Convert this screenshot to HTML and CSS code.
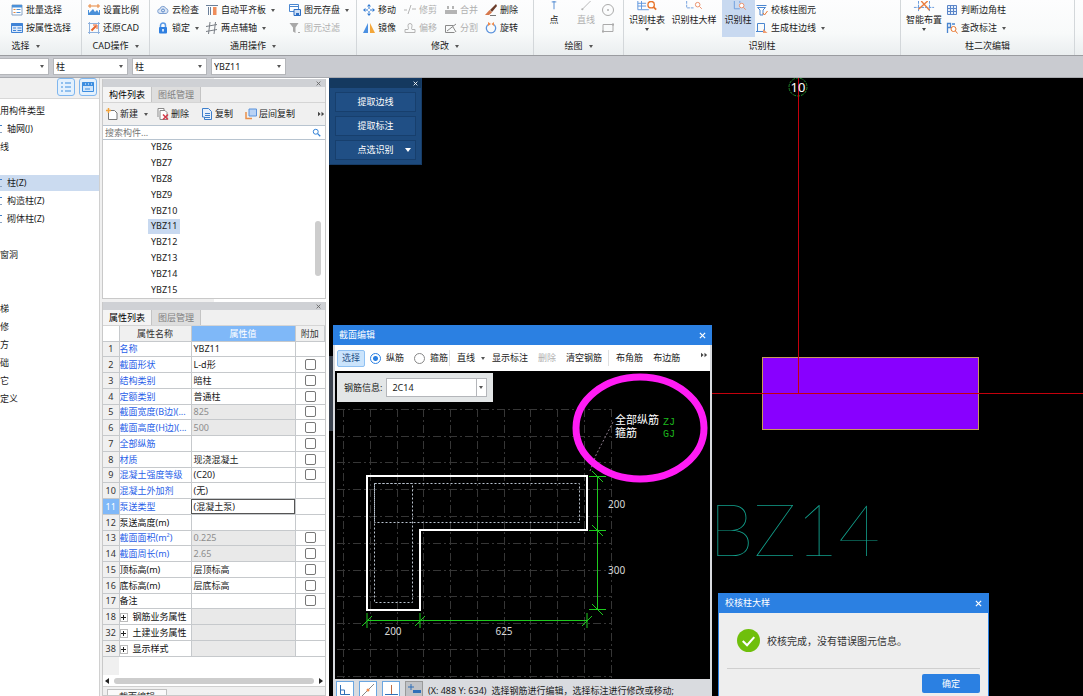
FILE: index.html
```html
<!DOCTYPE html>
<html lang="zh-CN">
  <head>
    <meta charset="UTF-8" />
    <meta name="viewport" content="width=device-width, initial-scale=1.0" />
    <title>校核柱大样</title>
    <link rel="stylesheet" href="styles.css" />
  </head>
  <body>
    <!-- Icon set -->
    <svg class="icon-defs" aria-hidden="true">
      <symbol id="i-batch" viewBox="0 0 12 12"><path d="M1 1h10v10H1z" fill="#fff" stroke="#8aa4c4"/><path d="M1 1h10v2.500H1z" fill="#4a90d9"/><path d="M2.500 5.500h2M2.500 8.500h2" stroke="#e8853a"/><path d="M5.500 5.500h4M5.500 8.500h4" stroke="#4a90d9"/></symbol>
      <symbol id="i-attr" viewBox="0 0 12 12"><path d="M.5 1.500h11v9H.5z" fill="#dbe9fa" stroke="#3f83d6"/><path d="M.5 1h11v3H.5z" fill="#3f83d6"/><path d="M2 6h3M2 8.500h3M6.500 6h4M6.500 8.500h4" stroke="#3f83d6"/></symbol>
      <symbol id="i-scale" viewBox="0 0 12 12"><path d="M0 2h12M2 0v4M10 0v4" stroke="#e8853a" fill="none"/><path d="M0 11V6h1v3l4-4 2 3 2-2 2 3V6h1v5z" fill="#4a90d9"/></symbol>
      <symbol id="i-restore" viewBox="0 0 12 12"><path d="M1.500 0v12M10.500 0v12M0 1.500h12M0 10.500h12" stroke="#8fb2de" fill="none"/><path d="M3.500 8.500L8 4" stroke="#e8632a" stroke-width="2"/><path d="M5 3h4v4" fill="none" stroke="#e8632a"/></symbol>
      <symbol id="i-cloud" viewBox="0 0 12 12"><path d="M3 9.500a2.300 2.300 0 0 1 0-4.600 3 3 0 0 1 5.800-.5A2.600 2.600 0 0 1 9 9.500z" fill="#dbe6f5" stroke="#7d9fd0"/><circle cx="6" cy="6.500" r="1.500" fill="none" stroke="#5a87c8"/></symbol>
      <symbol id="i-lock" viewBox="0 0 12 12"><path d="M3.500 6V3.500a2.500 2.500 0 0 1 5 0V6" fill="none" stroke="#5a9ae6" stroke-width="1.500"/><rect x="2" y="5" width="8" height="6.500" rx="1" fill="#2f7fe0"/><path d="M6 7v2.500" stroke="#fff" stroke-width="1.500"/></symbol>
      <symbol id="i-align" viewBox="0 0 12 12"><path d="M0 1.500h12M2.500 3v8M4.500 3v8" stroke="#6b7f99" fill="none"/><path d="M7 3h3.500v8H7z" fill="#ef8d5b"/></symbol>
      <symbol id="i-axis" viewBox="0 0 12 12"><path d="M4 0L2.500 12M9.500 0L8 12M0 4.500l11-2M0 9.500l11-2" stroke="#7a7f86" fill="none"/></symbol>
      <symbol id="i-save" viewBox="0 0 12 12"><path d="M.5.5h9v7h-9z" fill="#fff" stroke="#4a86d0"/><path d="M.5 2.500h9" stroke="#4a86d0"/><path d="M5 5.500h6.500v6H5z" fill="#cfe0f6" stroke="#2e6fc4"/><path d="M7 9h3v2.500H7z" fill="#2e6fc4"/></symbol>
      <symbol id="i-filter" viewBox="0 0 12 12"><path d="M.5 1h9L6.500 5.500V11L4 9.500v-4z" fill="#a8a8a8"/><path d="M9 10.500h2" stroke="#a8a8a8"/></symbol>
      <symbol id="i-move" viewBox="0 0 12 12"><path d="M6 0l2 2.500H4zM6 12l2-2.500H4zM0 6l2.500-2v4zM12 6L9.500 4v4zM5.500 3h1v2h-1zM5.500 7h1v2h-1zM3 5.500h2v1H3zM7 5.500h2v1H7z" fill="#2e78d2"/></symbol>
      <symbol id="i-mirror" viewBox="0 0 12 12"><path d="M5 1v10H0z" fill="#4a90e2"/><path d="M7 1v10h5z" fill="#f3a73b"/></symbol>
      <symbol id="i-trim" viewBox="0 0 12 12"><path d="M0 6h3M4 10L7 1M8 5h4" stroke="#b4b4b4" fill="none"/></symbol>
      <symbol id="i-offset" viewBox="0 0 12 12"><path d="M1 10.500h10v-3H8c-1-1 0-2 0-4a2 2 0 0 0-4 0c0 2 1 3 0 4H1z" fill="none" stroke="#b4b4b4"/></symbol>
      <symbol id="i-merge" viewBox="0 0 12 12"><path d="M0 6h12v4H0zM2 2h2v3H2zM7 2h2v3H7z" fill="#b4b4b4"/></symbol>
      <symbol id="i-split" viewBox="0 0 12 12"><path d="M.5 3.500h8M.5 3.500v7h9M2 9l9-7M8 5l3 5" stroke="#8a8a8a" fill="none"/></symbol>
      <symbol id="i-brush" viewBox="0 0 12 12"><path d="M11 0L5 6l2 2 5-6z" fill="#6b3c2a"/><path d="M4.500 6L7 8.500 4 11H0z" fill="#d6784c"/><path d="M5 11.500h6" stroke="#777"/></symbol>
      <symbol id="i-rotate" viewBox="0 0 12 12"><path d="M4 2a4.700 4.700 0 1 0 4 0" fill="none" stroke="#5b93dc" stroke-width="1.300"/><path d="M3 0l3 2-3 2zM9 0v4L6.500 2z" fill="#ef8a4a"/></symbol>
      <symbol id="i-point" viewBox="0 0 12 12"><path d="M6 0v9M3.500 1h5" stroke="#4a86d0" fill="none"/></symbol>
      <symbol id="i-line" viewBox="0 0 12 12"><path d="M2 9L11 0" stroke="#b4b4b4"/><circle cx="2" cy="9" r="1.200" fill="#b4b4b4"/></symbol>
      <symbol id="i-circle" viewBox="0 0 12 12"><circle cx="6" cy="6" r="5.500" fill="none" stroke="#aaa"/><path d="M5 6h2" stroke="#888"/></symbol>
      <symbol id="i-rect" viewBox="0 0 12 12"><path d="M1 2.500h10v7H1z" fill="none" stroke="#aaa"/><path d="M0 8.500h2v2H0zM10 1.500h2v2h-2z" fill="#aaa"/></symbol>
      <symbol id="i-table-find" viewBox="0 0 22 12"><path d="M1 0v9.500h12M1 2.500h9M1 5.500h9M5 0v9" stroke="#5b93dc" fill="none"/><circle cx="15.500" cy="4" r="3.500" fill="#fff" stroke="#e8762f" stroke-width="1.500"/><path d="M18 6.500l3 3" stroke="#e8762f" stroke-width="2"/></symbol>
      <symbol id="i-sample-find" viewBox="0 0 22 12"><path d="M3 0v7.500h8" stroke="#6b9bdc" fill="none" stroke-dasharray="3 1"/><circle cx="15" cy="4" r="2.500" fill="none" stroke="#ea8a62"/><path d="M17 6l2.500 2.500" stroke="#ea8a62"/></symbol>
      <symbol id="i-col-find" viewBox="0 0 22 12"><path d="M7 0v8.500h6M13 0v2" stroke="#6b9bdc" fill="none"/><circle cx="15" cy="5" r="2.500" fill="#fff" stroke="#ea8a62"/><path d="M17 7l2.500 2.500" stroke="#ea8a62"/></symbol>
      <symbol id="i-check-col" viewBox="0 0 12 12"><path d="M.5 1.500h10M1.500 3.500h8L7 6v5H4V6L1.500 3.500z" fill="none" stroke="#4a86d0"/><path d="M7 9l1.500 2 3-4" fill="none" stroke="#e8762f"/></symbol>
      <symbol id="i-edge" viewBox="0 0 12 12"><path d="M1.500 1.500h7v8h-7zM0 9.500h4" fill="none" stroke="#4a86d0"/><path d="M7 7l4.500 4H7z" fill="#ef9d70"/></symbol>
      <symbol id="i-smart" viewBox="0 0 22 12"><path d="M0 7h22M5 0v11M17 0v11" stroke="#5b93dc" stroke-dasharray="3 1" fill="none"/><path d="M8 0l9 10M15 0L5 9" stroke="#ea7d3e" stroke-width="1.500"/></symbol>
      <symbol id="i-grid" viewBox="0 0 12 12"><path d="M1.500 1.500h9v9h-9zM4.500 1.500v9M7.500 1.500v9M1.500 4.500h9M1.500 7.500h9" fill="#e7f0fb" stroke="#5b85c8"/></symbol>
      <symbol id="i-mark" viewBox="0 0 12 12"><path d="M1.500 11V1.500h3v4h-3M6 2h3" fill="none" stroke="#4a86d0" stroke-width="1.300"/><circle cx="7.500" cy="7" r="2.500" fill="#fff" stroke="#e8762f"/><path d="M9.500 9l2 2.500" stroke="#e8762f"/></symbol>
      <symbol id="i-new" viewBox="0 0 12 12"><path d="M2.500 2.500h6l2.500 2.500v6.500H2.500z" fill="#fff" stroke="#777"/><path d="M2.500 0v5M0 2.500h5" stroke="#f2a33a" stroke-width="1.500"/></symbol>
      <symbol id="i-del" viewBox="0 0 12 12"><path d="M1 9V.5h6v2M3 2.500h5l2 2v7H3z" fill="#fff" stroke="#8a8a8a"/><path d="M6 6.500l5 5M11 6.500l-5 5" stroke="#d43a4a" stroke-width="1.500"/></symbol>
      <symbol id="i-copy" viewBox="0 0 12 12"><path d="M1.500 9V.5h6l3 3v8h-7V9z" fill="#e8f1fc" stroke="#3f7fcb"/><path d="M4 5.500h5M4 7.500h5M4 9.500h5" stroke="#3f7fcb"/></symbol>
      <symbol id="i-layers" viewBox="0 0 12 12"><path d="M1 4v6.500h6" fill="none" stroke="#e88e4a" stroke-width="1.500"/><path d="M4 1h7.500v7H4z" fill="#b9d3f5" stroke="#5b93dc"/></symbol>
      <symbol id="i-search" viewBox="0 0 12 12"><circle cx="5" cy="5" r="3.300" fill="none" stroke="#2f7fd6" stroke-width="1.300"/><path d="M7.500 7.500L11 11" stroke="#2f7fd6" stroke-width="1.600"/></symbol>
      <symbol id="i-x" viewBox="0 0 8 8"><path d="M1 1l6 6M7 1L1 7" fill="none" stroke="currentColor" stroke-width="1.400"/></symbol>
      <symbol id="i-more" viewBox="0 0 8 8"><path d="M0 1.500L3 4 0 6.500zM4 1.500L7 4 4 6.500z" fill="#444"/></symbol>
      <symbol id="i-view-list" viewBox="0 0 12 12"><path d="M1 2h2M1 6h2M1 10h2M5 2h6M5 6h6M5 10h6" stroke="#3d8ee0"/></symbol>
      <symbol id="i-view-card" viewBox="0 0 12 12"><path d="M.5 1.500h11v9H.5z" fill="#cfe5fb" stroke="#3d8ee0"/><path d="M.5 1h11v4H.5z" fill="#3d8ee0"/><path d="M3 3h1M6 3h1M9 3h1" stroke="#fff"/><path d="M3 8h5" stroke="#3d8ee0"/></symbol>
    </svg>

    <header class="ribbon">
      <section class="group group-select">
        <div class="tools">
          <button class="tool"><svg><use href="#i-batch" /></svg>批量选择</button>
          <button class="tool"><svg><use href="#i-attr" /></svg>按属性选择</button>
        </div>
        <h2 class="arrow">选择</h2>
      </section>
      <section class="group group-cad">
        <div class="tools">
          <button class="tool"><svg><use href="#i-scale" /></svg>设置比例</button>
          <button class="tool"><svg><use href="#i-restore" /></svg>还原CAD</button>
        </div>
        <h2 class="arrow">CAD操作</h2>
      </section>
      <section class="group group-common">
        <div class="tools">
          <button class="tool"><svg><use href="#i-cloud" /></svg>云检查</button>
          <button class="tool arrow"><svg><use href="#i-lock" /></svg>锁定</button>
          <button class="tool arrow"><svg><use href="#i-align" /></svg>自动平齐板</button>
          <button class="tool arrow"><svg><use href="#i-axis" /></svg>两点辅轴</button>
          <button class="tool arrow"><svg><use href="#i-save" /></svg>图元存盘</button>
          <button class="tool" disabled><svg><use href="#i-filter" /></svg>图元过滤</button>
        </div>
        <h2 class="arrow">通用操作</h2>
      </section>
      <section class="group group-modify">
        <div class="tools">
          <button class="tool"><svg><use href="#i-move" /></svg>移动</button>
          <button class="tool"><svg><use href="#i-mirror" /></svg>镜像</button>
          <button class="tool" disabled><svg><use href="#i-trim" /></svg>修剪</button>
          <button class="tool" disabled><svg><use href="#i-offset" /></svg>偏移</button>
          <button class="tool" disabled><svg><use href="#i-merge" /></svg>合并</button>
          <button class="tool" disabled><svg><use href="#i-split" /></svg>分割</button>
          <button class="tool"><svg><use href="#i-brush" /></svg>删除</button>
          <button class="tool"><svg><use href="#i-rotate" /></svg>旋转</button>
        </div>
        <h2 class="arrow">修改</h2>
      </section>
      <section class="group group-draw">
        <div class="tools">
          <button class="big"><svg><use href="#i-point" /></svg>点</button>
          <button class="big" disabled><svg><use href="#i-line" /></svg>直线</button>
          <button class="tool" aria-label="圆"><svg><use href="#i-circle" /></svg></button>
          <button class="tool" aria-label="矩形"><svg><use href="#i-rect" /></svg></button>
        </div>
        <h2 class="arrow">绘图</h2>
      </section>
      <section class="group group-identify">
        <div class="tools">
          <button class="big drop"><svg><use href="#i-table-find" /></svg>识别柱表</button>
          <button class="big"><svg><use href="#i-sample-find" /></svg>识别柱大样</button>
          <button class="big active"><svg><use href="#i-col-find" /></svg>识别柱</button>
          <button class="tool"><svg><use href="#i-check-col" /></svg>校核柱图元</button>
          <button class="tool arrow"><svg><use href="#i-edge" /></svg>生成柱边线</button>
        </div>
        <h2>识别柱</h2>
      </section>
      <section class="group group-second">
        <div class="tools">
          <button class="big drop"><svg><use href="#i-smart" /></svg>智能布置</button>
          <button class="tool"><svg><use href="#i-grid" /></svg>判断边角柱</button>
          <button class="tool arrow"><svg><use href="#i-mark" /></svg>查改标注</button>
        </div>
        <h2>柱二次编辑</h2>
      </section>
    </header>

    <nav class="filters">
      <span class="picker picker-floor"><select aria-label="楼层"><option></option></select></span>
      <span class="picker"><select aria-label="构件类别"><option>柱</option></select></span>
      <span class="picker"><select aria-label="构件类型"><option>柱</option></select></span>
      <span class="picker"><select aria-label="构件名称"><option>YBZ11</option></select></span>
    </nav>

    <main class="workspace">
      <aside class="nav-tree">
        <div class="view-switch">
          <button aria-label="列表"><svg><use href="#i-view-list" /></svg></button>
          <button aria-label="卡片"><svg><use href="#i-view-card" /></svg></button>
        </div>
        <ul>
          <li>用构件类型</li>
          <li class="child"><i></i>轴网(J)</li>
          <li>线</li>
          <li></li>
          <li class="child selected"><i></i>柱(Z)</li>
          <li class="child"><i></i>构造柱(Z)</li>
          <li class="child"><i></i>砌体柱(Z)</li>
          <li></li>
          <li>窗洞</li>
          <li></li>
          <li></li>
          <li>梯</li>
          <li>修</li>
          <li>方</li>
          <li>础</li>
          <li>它</li>
          <li>定义</li>
        </ul>
      </aside>

      <aside class="docks">
        <section class="dock">
          <div class="dock-bar"><button aria-label="关闭"><svg><use href="#i-x" /></svg></button></div>
          <div class="tabs"><button class="current">构件列表</button><button>图纸管理</button></div>
          <div class="dock-tools">
            <button class="tool arrow"><svg><use href="#i-new" /></svg>新建</button>
            <button class="tool"><svg><use href="#i-del" /></svg>删除</button>
            <button class="tool"><svg><use href="#i-copy" /></svg>复制</button>
            <button class="tool"><svg><use href="#i-layers" /></svg>层间复制</button>
            <svg class="more"><use href="#i-more" /></svg>
          </div>
          <div class="search">
            <input type="text" placeholder="搜索构件..." aria-label="搜索构件" />
            <svg><use href="#i-search" /></svg>
          </div>
          <ul class="components">
            <li><span>YBZ6</span></li>
            <li><span>YBZ7</span></li>
            <li><span>YBZ8</span></li>
            <li><span>YBZ9</span></li>
            <li><span>YBZ10</span></li>
            <li class="selected"><span>YBZ11</span></li>
            <li><span>YBZ12</span></li>
            <li><span>YBZ13</span></li>
            <li><span>YBZ14</span></li>
            <li><span>YBZ15</span></li>
          </ul>
        </section>

        <section class="dock dock-props">
          <div class="dock-bar"><button aria-label="关闭"><svg><use href="#i-x" /></svg></button></div>
          <div class="tabs"><button class="current">属性列表</button><button>图层管理</button></div>
          <table class="props">
            <thead>
              <tr><th class="corner"></th><th>属性名称</th><th class="value-head">属性值</th><th>附加</th></tr>
            </thead>
            <tbody>
              <tr><th>1</th><td class="key">名称</td><td>YBZ11</td><td></td></tr>
              <tr><th>2</th><td class="key">截面形状</td><td>L-d形</td><td><input type="checkbox" aria-label="附加 截面形状" /></td></tr>
              <tr><th>3</th><td class="key">结构类别</td><td>暗柱</td><td><input type="checkbox" aria-label="附加 结构类别" /></td></tr>
              <tr><th>4</th><td class="key">定额类别</td><td>普通柱</td><td><input type="checkbox" aria-label="附加 定额类别" /></td></tr>
              <tr><th>5</th><td class="key">截面宽度(B边)(...</td><td class="locked">825</td><td><input type="checkbox" aria-label="附加 截面宽度" /></td></tr>
              <tr><th>6</th><td class="key">截面高度(H边)(...</td><td class="locked">500</td><td><input type="checkbox" aria-label="附加 截面高度" /></td></tr>
              <tr><th>7</th><td class="key">全部纵筋</td><td></td><td><input type="checkbox" aria-label="附加 全部纵筋" /></td></tr>
              <tr><th>8</th><td class="key">材质</td><td>现浇混凝土</td><td><input type="checkbox" aria-label="附加 材质" /></td></tr>
              <tr><th>9</th><td class="key">混凝土强度等级</td><td>(C20)</td><td><input type="checkbox" aria-label="附加 混凝土强度等级" /></td></tr>
              <tr><th>10</th><td class="key">混凝土外加剂</td><td>(无)</td><td></td></tr>
              <tr class="editing"><th>11</th><td class="key">泵送类型</td><td>(混凝土泵)</td><td></td></tr>
              <tr><th>12</th><td class="key own">泵送高度(m)</td><td></td><td></td></tr>
              <tr><th>13</th><td class="key">截面面积(m²)</td><td class="locked">0.225</td><td><input type="checkbox" aria-label="附加 截面面积" /></td></tr>
              <tr><th>14</th><td class="key">截面周长(m)</td><td class="locked">2.65</td><td><input type="checkbox" aria-label="附加 截面周长" /></td></tr>
              <tr><th>15</th><td class="key own">顶标高(m)</td><td>层顶标高</td><td><input type="checkbox" aria-label="附加 顶标高" /></td></tr>
              <tr><th>16</th><td class="key own">底标高(m)</td><td>层底标高</td><td><input type="checkbox" aria-label="附加 底标高" /></td></tr>
              <tr><th>17</th><td class="key own">备注</td><td></td><td><input type="checkbox" aria-label="附加 备注" /></td></tr>
              <tr><th>18</th><td class="key own"><b class="plus"></b>钢筋业务属性</td><td class="locked"></td><td></td></tr>
              <tr><th>32</th><td class="key own"><b class="plus"></b>土建业务属性</td><td class="locked"></td><td></td></tr>
              <tr><th>38</th><td class="key own"><b class="plus"></b>显示样式</td><td class="locked"></td><td></td></tr>
            </tbody>
          </table>
          <div class="props-rest"></div>
          <div class="hscroll"><span></span></div>
          <div class="dock-foot"><button>截面编辑</button></div>
        </section>
      </aside>

      <section class="drawing">
        <svg class="plan">
          <circle cx="469" cy="9" r="9" fill="none" stroke="#1f8a2a" stroke-dasharray="3 1" />
          <rect x="433.500" y="279.500" width="216" height="72" fill="#8800ff" stroke="#c89a5a" />
          <rect class="axis" x="469" y="0" width="1" height="316" />
          <rect class="axis" x="0" y="315" width="100%" height="1" />
          <path d="M4 309a6 6 0 0 0 0 13" stroke="#1f8a2a" fill="none" />
          <text class="axis-no" x="469" y="14">10</text>
          <text class="plan-label" x="380" y="478">BZ14</text>
        </svg>

        <div class="splitter"></div>

        <div class="quick-panel">
          <div class="quick-bar"><button aria-label="关闭"><svg><use href="#i-x" /></svg></button></div>
          <button>提取边线</button>
          <button>提取标注</button>
          <button class="drop-side">点选识别</button>
        </div>

        <div class="section-window">
          <div class="title-bar">
            <span>截面编辑</span>
            <button aria-label="关闭"><svg><use href="#i-x" /></svg></button>
          </div>
          <div class="section-tools">
            <button class="picked">选择</button>
            <label><input type="radio" name="bar" checked />纵筋</label>
            <label><input type="radio" name="bar" />箍筋</label>
            <button class="arrow ruled">直线</button>
            <button>显示标注</button>
            <button disabled>删除</button>
            <button>清空钢筋</button>
            <button class="ruled">布角筋</button>
            <button>布边筋</button>
            <svg class="more"><use href="#i-more" /></svg>
          </div>
          <div class="section-canvas">
            <svg viewBox="0 0 374 308">
              <!-- background grid -->
              <g class="grid">
                <path d="M8.500 38V308M35.500 38V308M62.500 38V308M88.500 38V308M115.500 38V308M142.500 38V308M169.500 38V308M195.500 38V308M222.500 38V308M249.500 38V308M276.500 38V308" />
                <path d="M2 38.500H276M2 65.500H276M2 91.500H276M2 118.500H276M2 145.500H276M2 172.500H276M2 199.500H276M2 225.500H276M2 252.500H276M2 278.500H276M2 305.500H276" />
              </g>
              <!-- column outline and stirrups -->
              <path class="outline" d="M32 105H252V159H85V239H32z" />
              <path class="stirrup" d="M39.500 112.500H244.500V151.500H39.500zM39.500 112.500H77.500V231.500H39.500z" />
              <!-- dimensions -->
              <path class="dim" d="M32 249.500H252M32 242V257M85 242V257M252 242V257M27 255L37 245M80 255L90 245M247 255L257 245M262.500 105V239M254 105.500H271M254 159.500H271M254 238.500H271M257 100L268 111M257 154L268 165M257 233L268 244" />
              <path class="leader" d="M255 100L261 84L278 51" />
              <text class="dim-text" x="58" y="264" text-anchor="middle">200</text>
              <text class="dim-text" x="169" y="264" text-anchor="middle">625</text>
              <text class="dim-text" x="273" y="137">200</text>
              <text class="dim-text" x="273" y="203">300</text>
              <text class="note" x="280" y="53">全部纵筋</text>
              <text class="note" x="280" y="66">箍筋</text>
              <text class="code" x="328" y="54">ZJ</text>
              <text class="code" x="328" y="66">GJ</text>
              <ellipse class="highlight" cx="305" cy="57" rx="64" ry="51" />
            </svg>
            <div class="bar-info">
              <label for="bar-info">钢筋信息:</label>
              <span class="picker"><select id="bar-info"><option>2C14</option></select></span>
            </div>
          </div>
          <div class="status">
            <button aria-label="正交"><svg viewBox="0 0 16 16"><path d="M3.500 3v9.500H13M3.500 8h4v4.500" fill="none" stroke="#2f6fb8" /></svg></button>
            <button aria-label="中点"><svg viewBox="0 0 16 16"><path d="M2 14L14 2" stroke="#888" /><circle cx="8" cy="8" r="1.500" fill="#ef8a4a" /></svg></button>
            <button aria-label="垂足"><svg viewBox="0 0 16 16"><path d="M8.500 3v9" stroke="#c06a40" /><path d="M2 12.500h13" stroke="#2f6fb8" /></svg></button>
            <button class="down" aria-label="动态输入"><svg viewBox="0 0 16 16"><path d="M2 5h6M5 2v6" stroke="#2f6fb8" /><path d="M7 8h8v3H7z" fill="#2f6fb8" /></svg></button>
            <output>(X: 488 Y: 634)</output>
            <span>选择钢筋进行编辑，选择标注进行修改或移动;</span>
          </div>
        </div>

        <div class="message" role="dialog" aria-label="校核柱大样">
          <div class="title-bar">
            <span>校核柱大样</span>
            <button aria-label="关闭"><svg><use href="#i-x" /></svg></button>
          </div>
          <div class="message-body">
            <svg viewBox="0 0 24 24"><circle cx="12" cy="12" r="12" fill="#6fbf0b" /><path d="M6 12.500l4.500 4.500 7.500-8.500" fill="none" stroke="#fff" stroke-width="2.200" /></svg>
            <p>校核完成，没有错误图元信息。</p>
          </div>
          <div class="message-foot"><button>确定</button></div>
        </div>
      </section>
    </main>
  </body>
</html>
```
FILE: styles.css
```css
* {
  box-sizing: border-box;
}
body {
  margin: 0;
  height: 100vh;
  display: flex;
  flex-direction: column;
  overflow: hidden;
  background: #f0f0f0;
  color: #1a1a1a;
  font-family: "Noto Sans", "Noto Sans CJK SC", sans-serif;
  font-size: 9px;
  line-height: 12px;
}
button,
input,
select {
  margin: 0;
  padding: 0;
  border: 0;
  background: none;
  color: inherit;
  font: inherit;
}
button {
  white-space: nowrap;
}
ul,
h2,
p {
  margin: 0;
  padding: 0;
  list-style: none;
  font-size: inherit;
  font-weight: normal;
}
button:disabled {
  color: #b0b0b0;
}
.icon-defs {
  display: none;
}

/* small drop-down triangle after a caption */
.arrow::after,
.picker::after {
  content: "";
  display: inline-block;
  flex: none;
  margin-left: 6px;
  border: 2px solid transparent;
  border-top: 3px solid #555;
  border-bottom: 0;
  vertical-align: middle;
}

/* Ribbon */
.ribbon {
  flex: none;
  display: grid;
  grid-template-columns: 82px 68px 207px 177px 90px 277px 174px 1fr;
  height: 56px;
  overflow: hidden;
  background: linear-gradient(#fdfdfe, #f8fafa 60%, #eaeeef);
  border-bottom: 1px solid #9a9ca0;
}
.group {
  border-right: 1px solid #d3d7da;
}
.group h2 {
  height: 18px;
  line-height: 18px;
  text-align: center;
}
.group-select h2 {
  padding-right: 30px;
}
.tools {
  display: grid;
  grid-template-rows: 18px 18px;
  grid-auto-flow: column;
  justify-content: start;
  padding-top: 1px;
}
.group-select .tools {
  padding-left: 11px;
}
.group-cad .tools {
  padding-left: 6px;
}
.group-common .tools {
  padding-left: 7px;
  grid-template-columns: 49px 83px 66px;
}
.group-modify .tools {
  padding-left: 6px;
  grid-template-columns: 41px 41px 40px 40px;
}
.group-draw .tools {
  padding-left: 4px;
  grid-template-columns: 32px 32px 15px;
}
.group-identify .tools {
  padding-left: 2px;
  grid-template-columns: 42px 52px 36px 80px;
}
.group-second .tools {
  padding-left: 1px;
  grid-template-columns: 44px 70px;
}
.tool {
  display: flex;
  align-items: center;
  gap: 3px;
}
.tool svg {
  flex: none;
  width: 12px;
  height: 12px;
}
.tool.arrow::after {
  margin-left: 2px;
}
.big {
  grid-row: span 2;
  position: relative;
  display: flex;
  flex-direction: column;
  align-items: center;
  gap: 2px;
}
.big svg {
  flex: none;
  width: 22px;
  height: 11px;
}
.big.drop::after {
  content: "";
  border: 2px solid transparent;
  border-top: 3px solid #444;
}
.big.active {
  justify-self: center;
  width: 33px;
  margin-top: -1px;
  padding-top: 1px;
  background: #c8d9f0;
}

/* Filter bar */
.filters {
  flex: none;
  display: flex;
  align-items: center;
  gap: 4px;
  height: 22px;
  background: #c9cbd0;
  border-bottom: 1px solid #a9abb0;
}
.picker {
  position: relative;
  width: 75px;
  height: 17px;
  background: #fff;
  border: 1px solid #b4b6ba;
}
.picker::after {
  position: absolute;
  right: 4px;
  top: 6px;
}
.picker select {
  width: 100%;
  height: 100%;
  padding-left: 2px;
  appearance: none;
}
.picker-floor {
  width: 49px;
  border-left: 0;
}

/* Work area */
.workspace {
  flex: 1;
  min-height: 0;
  display: grid;
  grid-template-columns: 100px 229px 1fr;
}
.nav-tree {
  overflow: hidden;
  background: #fff;
  border-right: 1px solid #d0d0d0;
}
.view-switch {
  display: flex;
  justify-content: flex-end;
  gap: 4px;
  height: 21px;
  padding: 0 2px 0 0;
  background: #f0f0f0;
  border-bottom: 1px solid #d8d8d8;
}
.view-switch button {
  width: 18px;
  height: 18px;
  background: #e4f1fd;
  border: 1px solid #7fb6ee;
  border-radius: 3px;
}
.view-switch svg {
  display: block;
  width: 12px;
  height: 12px;
  margin: auto;
}
.nav-tree ul {
  padding-top: 3px;
}
.nav-tree li {
  display: flex;
  align-items: center;
  gap: 5px;
  height: 18px;
}
.nav-tree .child i {
  width: 2px;
  height: 8px;
  border-top: 1px solid #3f7fcb;
  border-bottom: 1px solid #8aa4c4;
}
.nav-tree .selected {
  background: #cbdbf0;
  border: solid #fff;
  border-width: 1px 0;
}

/* Docked panels */
.docks {
  display: flex;
  flex-direction: column;
  min-height: 0;
  padding: 1px 3px 0 2px;
  background: linear-gradient(90deg, #f0f0f0 50%, #fff 50%);
}
.dock {
  flex: none;
  background: #fff;
  border: 1px solid #c9c9c9;
  border-top: 0;
}
.dock-props {
  flex: 1;
  display: flex;
  flex-direction: column;
  min-height: 0;
  margin-top: 3px;
}
.dock-bar {
  flex: none;
  display: flex;
  justify-content: flex-end;
  align-items: center;
  height: 8px;
  padding-right: 4px;
  background: #cfd1d5;
  color: #666;
}
.dock-bar button,
.dock-bar svg {
  display: block;
  width: 5px;
  height: 5px;
}
.tabs {
  flex: none;
  display: flex;
  height: 16px;
  background: #f0f0f0;
  border-bottom: 1px solid #d5d5d5;
}
.tabs button {
  width: 49px;
  background: #dedede;
  border-right: 1px solid #c4c4c4;
  color: #808080;
}
.tabs .current {
  background: #f4f4f4;
  color: #000;
}
.dock-tools {
  display: flex;
  align-items: center;
  gap: 12px;
  height: 22px;
  padding: 0 0 0 3px;
  background: #f0f0f0;
}
.dock-tools .tool {
  gap: 2px;
}
.dock-tools .tool.arrow::after {
  margin-left: 4px;
  margin-right: -3px;
}
.more {
  width: 7px;
  height: 8px;
  margin-left: auto;
}
.search {
  display: flex;
  align-items: center;
  height: 15px;
  padding: 0 4px 0 2px;
  border-top: 1px solid #b8c4d0;
  border-bottom: 1px solid #b8c4d0;
}
.search input {
  flex: 1;
  min-width: 0;
  height: 100%;
}
.search input::placeholder {
  color: #757575;
}
.search svg {
  width: 9px;
  height: 9px;
}
.components {
  position: relative;
  display: flex;
  flex-direction: column;
  height: 158px;
  padding-left: 45px;
}
.components li {
  flex: 1;
  display: flex;
  align-items: center;
  min-height: 0;
}
.components span {
  padding: 1px 3px 2px;
}
.components .selected span {
  background: #c8d9f0;
}
.components::after {
  content: "";
  position: absolute;
  right: 4px;
  top: 81px;
  width: 6px;
  height: 55px;
  border-radius: 3px;
  background: #cdcdcd;
}

/* Property table */
.props {
  flex: none;
  width: 100%;
  height: 331px;
  table-layout: fixed;
  border-collapse: collapse;
}
.props th,
.props td {
  padding: 0;
  border: 1px solid #c6c9cc;
  overflow: hidden;
  white-space: nowrap;
  line-height: 11px;
}
.props th {
  background: #f0f0f0;
  border-left: 0;
  font-weight: normal;
  color: #333;
}
.props thead th {
  height: 15px;
  border-top: 0;
}
.props .corner {
  width: 16px;
  background: #fff;
}
.props th:nth-child(2) {
  width: 72px;
}
.props th:nth-child(3) {
  width: 104px;
}
.props .value-head {
  background: #7fb8f8;
  color: #fff;
}
.props td {
  padding-left: 2px;
}
.props .key {
  padding-left: 0;
  color: #2a5fe8;
}
.props .own {
  color: #111;
}
.props .locked {
  background: #e9e9e9;
  color: #8d8d8d;
}
.props .editing th {
  background: #7fb8f8;
  color: #fff;
}
.props .editing td:nth-child(3) {
  outline: 1px solid #555;
  outline-offset: -1px;
}
.props td:last-child {
  padding: 0;
  border-right: 0;
  text-align: center;
}
.props input {
  display: block;
  width: 11px;
  height: 11px;
  margin: 0 auto;
  appearance: none;
  background: #fff;
  border: 1px solid #777;
  border-radius: 2px;
}
.plus {
  display: inline-block;
  width: 8px;
  height: 9px;
  margin-right: 5px;
  border: 1px solid #bbb;
  background:
    linear-gradient(#222, #222) center / 5px 1px no-repeat,
    linear-gradient(#222, #222) center / 1px 5px no-repeat;
  vertical-align: middle;
}
.props-rest {
  flex: none;
  height: 18px;
  background: linear-gradient(90deg, #f0f0f0 16px, #fff 16px);
}
.hscroll {
  flex: none;
  display: flex;
  align-items: center;
  gap: 5px;
  height: 11px;
  padding: 0 2px;
}
.hscroll::before,
.hscroll::after {
  content: "";
  border: 3px solid transparent;
}
.hscroll::before {
  border-left: 0;
  border-right: 4px solid #222;
}
.hscroll::after {
  border-right: 0;
  border-left: 4px solid #222;
}
.hscroll span {
  flex: 1;
  height: 6px;
  border-radius: 3px;
  background: #cdcdcd;
}
.dock-foot {
  flex: 1;
  padding: 2px 4px 0;
  background: #f0f0f0;
  border-top: 1px solid #d0d0d0;
  overflow: hidden;
}
.dock-foot button {
  width: 60px;
  height: 16px;
  background: #fafafa;
  border: 1px solid #c0c0c0;
}

/* Drawing area */
.drawing {
  position: relative;
  overflow: hidden;
  background: #000;
}
.plan {
  position: absolute;
  width: 100%;
  height: 100%;
}
.axis {
  fill: #c4000c;
}
.axis-no {
  fill: #fff;
  font-size: 13px;
  text-anchor: middle;
}
.plan-label {
  fill: #12a08c;
  font-family: Lato, sans-serif;
  font-size: 72px;
  font-weight: 100;
}
.splitter {
  position: absolute;
  left: 0;
  top: 278px;
  width: 4px;
  height: 75px;
  background: #3c4450;
}
.quick-panel {
  position: absolute;
  left: 0;
  top: 0;
  display: flex;
  flex-direction: column;
  gap: 4px;
  width: 93px;
  padding: 0 5px 4px;
  background: #1d4a7d;
  border: 1px solid #173c66;
  color: #fff;
}
.quick-bar {
  display: flex;
  justify-content: flex-end;
  align-items: center;
  height: 9px;
  margin: 0 -5px;
  padding-right: 3px;
  background: #14395f;
}
.quick-bar button,
.quick-bar svg {
  display: block;
  width: 5px;
  height: 5px;
}
.quick-panel > button {
  position: relative;
  height: 20px;
  background: #204f85;
  border: 1px solid #173f6d;
}
.drop-side::after {
  content: "";
  position: absolute;
  right: 4px;
  top: 7px;
  border: 3px solid transparent;
  border-top: 4px solid #fff;
}

/* Floating windows */
.title-bar {
  flex: none;
  display: flex;
  align-items: center;
  justify-content: space-between;
  height: 20px;
  padding: 0 6px;
  background: #2b80e2;
  color: #fff;
}
.title-bar button,
.title-bar svg {
  display: block;
  width: 7px;
  height: 7px;
}
.section-window {
  position: absolute;
  left: 4px;
  top: 247px;
  display: flex;
  flex-direction: column;
  width: 379px;
  background: #d9dbdf;
}
.section-tools {
  flex: none;
  display: flex;
  align-items: center;
  gap: 10px;
  height: 26px;
  margin: 0 2px;
  padding: 0 2px;
  background: #fff;
}
.section-tools .picked {
  height: 17px;
  margin-right: -5px;
  padding: 0 4px;
  background: #cbe4fc;
  border: 1px solid #8fc1f3;
  border-radius: 2px;
  color: #1d4f86;
}
.section-tools label {
  display: flex;
  align-items: center;
  gap: 5px;
}
.section-tools label:last-of-type {
  margin-right: -5px;
}
.section-tools input {
  width: 11px;
  height: 11px;
  appearance: none;
  border: 1px solid #888;
  border-radius: 50%;
}
.section-tools input:checked {
  border-color: #2b80e2;
  background: radial-gradient(#2b80e2 0 2px, #fff 3px);
}
.section-tools .arrow {
  margin-right: -3px;
}
.section-tools .ruled {
  height: 16px;
  margin-left: -4px;
  padding-left: 7px;
  border-left: 1px solid #e0e0e0;
}
.section-tools .more {
  align-self: flex-start;
  margin-top: 6px;
}
.section-canvas {
  position: relative;
  flex: none;
  height: 308px;
  margin: 0 2px;
  background: #000;
}
.section-canvas > svg {
  display: block;
  width: 374px;
  height: 308px;
}
.grid {
  fill: none;
  stroke: #363636;
  stroke-dasharray: 8 3 2 3;
}
.outline {
  fill: none;
  stroke: #fff;
  stroke-width: 2;
}
.stirrup {
  fill: none;
  stroke: #b9c3cf;
  stroke-dasharray: 2 2;
}
.dim {
  fill: none;
  stroke: #1ecb1e;
}
.leader {
  fill: none;
  stroke: #8a7a8a;
  stroke-dasharray: 2 2;
}
.dim-text {
  fill: #d8d8d8;
  font-size: 10px;
}
.note {
  fill: #fff;
  font-size: 11px;
}
.code {
  fill: #1db81d;
  font-family: "Liberation Mono", monospace;
  font-size: 10px;
}
.highlight {
  fill: none;
  stroke: #ff1cf4;
  stroke-width: 7;
}
.bar-info {
  position: absolute;
  left: 2px;
  top: 2px;
  display: flex;
  align-items: center;
  gap: 4px;
  width: 156px;
  height: 29px;
  padding-left: 7px;
  background: #e3e6e7;
}
.bar-info .picker {
  width: 101px;
  height: 19px;
}
.bar-info select {
  padding-left: 5px;
  background: linear-gradient(#b4b6ba, #b4b6ba) right 9px top / 1px 100% no-repeat;
}
.bar-info .picker::after {
  right: 3px;
  top: 7px;
}
.status {
  flex: none;
  display: flex;
  gap: 5px;
  height: 22px;
  padding: 2px 3px;
  line-height: 20px;
  white-space: nowrap;
}
.status button {
  width: 18px;
  height: 18px;
  background: #fff;
  border: 1px solid #6ba6e0;
}
.status .down {
  background: #c0c2c6;
  border-color: #999;
}
.status svg {
  display: block;
  width: 16px;
  height: 16px;
}
.message {
  position: absolute;
  left: 389px;
  top: 515px;
  width: 271px;
  background: #eee;
  border: 1px solid #2b80e2;
  border-top: 0;
}
.message-body {
  display: flex;
  align-items: center;
  gap: 7px;
  height: 56px;
  margin: 0 8px;
  padding-left: 10px;
  border-bottom: 1px solid #cfcfcf;
  font-size: 10px;
  color: #333;
}
.message-body svg {
  width: 23px;
  height: 23px;
}
.message-foot {
  display: flex;
  justify-content: flex-end;
  padding: 5px 8px 8px;
}
.message-foot button {
  width: 58px;
  height: 19px;
  background: #2b80e2;
  border-radius: 2px;
  color: #fff;
}
```
